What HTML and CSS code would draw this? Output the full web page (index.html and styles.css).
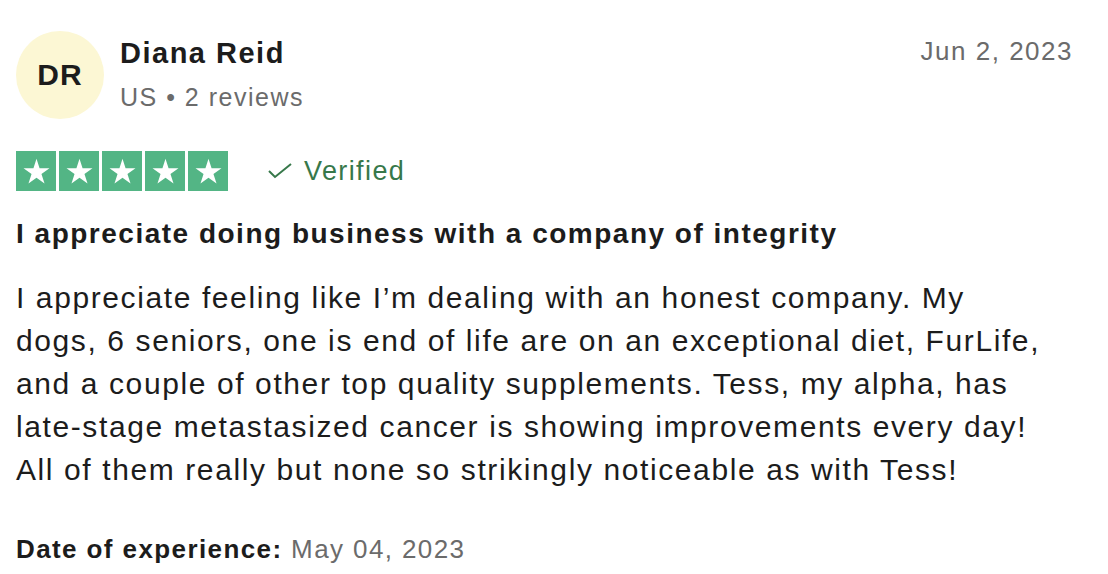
FILE: index.html
```html
<!DOCTYPE html>
<html lang="en">
<head>
    <meta charset="UTF-8">
    <meta name="viewport" content="width=device-width, initial-scale=1.0">
    <title>Review - Diana Reid</title>
    <link rel="stylesheet" href="styles.css">
</head>
<body>
    <article class="review">
        <header class="review-header">
            <div class="avatar">DR</div>
            <div class="consumer">
                <span class="consumer-name">Diana Reid</span>
                <span class="consumer-meta">US &bull; 2 reviews</span>
            </div>
            <time class="review-date">Jun 2, 2023</time>
        </header>

        <div class="rating-row">
            <div class="stars">
                <span class="star"><svg viewBox="0 0 24 24"><path d="M12 3.2l2.1 6.5h6.8l-5.5 4 2.1 6.5L12 16.2l-5.5 4 2.1-6.5-5.5-4h6.8z"/></svg></span>
                <span class="star"><svg viewBox="0 0 24 24"><path d="M12 3.2l2.1 6.5h6.8l-5.5 4 2.1 6.5L12 16.2l-5.5 4 2.1-6.5-5.5-4h6.8z"/></svg></span>
                <span class="star"><svg viewBox="0 0 24 24"><path d="M12 3.2l2.1 6.5h6.8l-5.5 4 2.1 6.5L12 16.2l-5.5 4 2.1-6.5-5.5-4h6.8z"/></svg></span>
                <span class="star"><svg viewBox="0 0 24 24"><path d="M12 3.2l2.1 6.5h6.8l-5.5 4 2.1 6.5L12 16.2l-5.5 4 2.1-6.5-5.5-4h6.8z"/></svg></span>
                <span class="star"><svg viewBox="0 0 24 24"><path d="M12 3.2l2.1 6.5h6.8l-5.5 4 2.1 6.5L12 16.2l-5.5 4 2.1-6.5-5.5-4h6.8z"/></svg></span>
            </div>
            <span class="verified">
                <svg viewBox="0 0 24 16"><path d="M1 8l6 6L23 1"/></svg>
                Verified
            </span>
        </div>

        <h2 class="review-title">I appreciate doing business with a company of integrity</h2>
        <p class="review-text">I appreciate feeling like I’m dealing with an honest company. My<br>
            dogs, 6 seniors, one is end of life are on an exceptional diet, FurLife,<br>
            and a couple of other top quality supplements. Tess, my alpha, has<br>
            late-stage metastasized cancer is showing improvements every day!<br>
            All of them really but none so strikingly noticeable as with Tess!</p>

        <p class="experience"><strong>Date of experience:</strong> May 04, 2023</p>
    </article>
</body>
</html>
```

FILE: styles.css
```css
body {
    font-family: "Liberation Sans", Arial, sans-serif;
    background-color: #ffffff;
    color: #1c1c1c;
    margin: 0;
    padding: 31px 35px 0 16px;
}

.review-header {
    display: flex;
    align-items: flex-start;
    gap: 16px;
}

.avatar {
    width: 88px;
    height: 88px;
    border-radius: 50%;
    background-color: #fcf7d4;
    display: flex;
    align-items: center;
    justify-content: center;
    font-size: 30px;
    font-weight: bold;
    letter-spacing: 1px;
    flex-shrink: 0;
}

.consumer {
    display: flex;
    flex-direction: column;
    padding-top: 2px;
}

.consumer-name {
    font-size: 29px;
    font-weight: bold;
    letter-spacing: 1.5px;
    line-height: 40px;
}

.consumer-meta {
    font-size: 25px;
    color: #6b6b6b;
    letter-spacing: 1.5px;
    line-height: 40px;
    margin-top: 4px;
}

.review-date {
    margin-left: auto;
    font-size: 26px;
    color: #6b6b6b;
    letter-spacing: 1.5px;
    line-height: 40px;
}

.rating-row {
    display: flex;
    align-items: center;
    gap: 40px;
    margin-top: 32px;
}

.stars {
    display: flex;
    gap: 3px;
}

.star {
    width: 40px;
    height: 40px;
    background-color: #53b585;
    display: flex;
    align-items: center;
    justify-content: center;
}

.star svg {
    width: 35px;
    height: 35px;
    fill: #ffffff;
}

.verified {
    display: flex;
    align-items: center;
    gap: 12px;
    font-size: 27px;
    letter-spacing: 1.4px;
    color: #37784a;
}

.verified svg {
    width: 24px;
    height: 16px;
    fill: none;
    stroke: #37784a;
    stroke-width: 2;
}

.review-title {
    font-size: 28px;
    font-weight: bold;
    letter-spacing: 1.5px;
    line-height: 36px;
    margin: 25px 0 0;
}

.review-text {
    font-size: 30px;
    letter-spacing: 1.6px;
    line-height: 43px;
    margin: 24px 0 0;
}

.experience {
    font-size: 26px;
    letter-spacing: 1.4px;
    line-height: 30px;
    color: #6b6b6b;
    margin: 43px 0 0;
}

.experience strong {
    color: #1c1c1c;
}
```
